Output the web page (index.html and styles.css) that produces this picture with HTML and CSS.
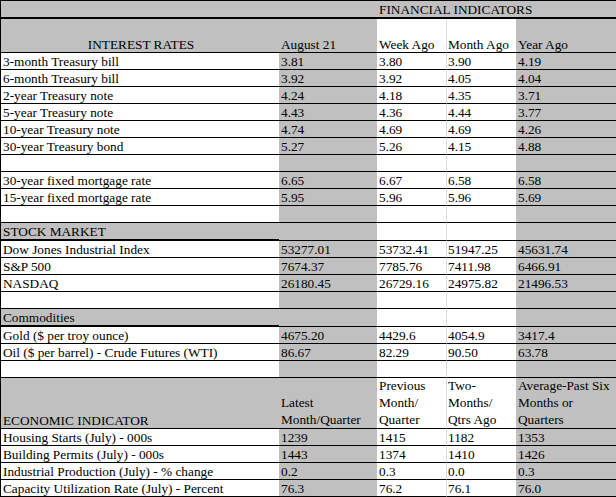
FILE: index.html
```html
<!DOCTYPE html>
<html>
<head>
<meta charset="utf-8">
<title>Financial Indicators</title>
<link rel="stylesheet" href="styles.css">
</head>
<body>
<div class="sheet">
  <div class="row top">
    <div class="c c1"></div><div class="c c2"></div><div class="c span3">FINANCIAL INDICATORS</div>
  </div>
  <div class="row head">
    <div class="c c1 center">INTEREST RATES</div><div class="c c2">August 21</div><div class="c c3">Week Ago</div><div class="c c4">Month Ago</div><div class="c c5">Year Ago</div>
  </div>
  <div class="row"><div class="c c1">3-month Treasury bill</div><div class="c c2">3.81</div><div class="c c3">3.80</div><div class="c c4">3.90</div><div class="c c5">4.19</div></div>
  <div class="row"><div class="c c1">6-month Treasury bill</div><div class="c c2">3.92</div><div class="c c3">3.92</div><div class="c c4">4.05</div><div class="c c5">4.04</div></div>
  <div class="row"><div class="c c1">2-year Treasury note</div><div class="c c2">4.24</div><div class="c c3">4.18</div><div class="c c4">4.35</div><div class="c c5">3.71</div></div>
  <div class="row"><div class="c c1">5-year Treasury note</div><div class="c c2">4.43</div><div class="c c3">4.36</div><div class="c c4">4.44</div><div class="c c5">3.77</div></div>
  <div class="row"><div class="c c1">10-year Treasury note</div><div class="c c2">4.74</div><div class="c c3">4.69</div><div class="c c4">4.69</div><div class="c c5">4.26</div></div>
  <div class="row"><div class="c c1">30-year Treasury bond</div><div class="c c2">5.27</div><div class="c c3">5.26</div><div class="c c4">4.15</div><div class="c c5">4.88</div></div>
  <div class="row"><div class="c c1"></div><div class="c c2"></div><div class="c c3"></div><div class="c c4"></div><div class="c c5"></div></div>
  <div class="row"><div class="c c1">30-year fixed mortgage rate</div><div class="c c2">6.65</div><div class="c c3">6.67</div><div class="c c4">6.58</div><div class="c c5">6.58</div></div>
  <div class="row"><div class="c c1">15-year fixed mortgage rate</div><div class="c c2">5.95</div><div class="c c3">5.96</div><div class="c c4">5.96</div><div class="c c5">5.69</div></div>
  <div class="row"><div class="c c1"></div><div class="c c2"></div><div class="c c3"></div><div class="c c4"></div><div class="c c5"></div></div>
  <div class="row sec"><div class="c c1">STOCK MARKET</div><div class="c c2"></div><div class="c c3"></div><div class="c c4"></div><div class="c c5"></div></div>
  <div class="row"><div class="c c1">Dow Jones Industrial Index</div><div class="c c2">53277.01</div><div class="c c3">53732.41</div><div class="c c4">51947.25</div><div class="c c5">45631.74</div></div>
  <div class="row"><div class="c c1">S&amp;P 500</div><div class="c c2">7674.37</div><div class="c c3">7785.76</div><div class="c c4">7411.98</div><div class="c c5">6466.91</div></div>
  <div class="row"><div class="c c1">NASDAQ</div><div class="c c2">26180.45</div><div class="c c3">26729.16</div><div class="c c4">24975.82</div><div class="c c5">21496.53</div></div>
  <div class="row"><div class="c c1"></div><div class="c c2"></div><div class="c c3"></div><div class="c c4"></div><div class="c c5"></div></div>
  <div class="row sec"><div class="c c1">Commodities</div><div class="c c2"></div><div class="c c3"></div><div class="c c4"></div><div class="c c5"></div></div>
  <div class="row"><div class="c c1">Gold ($ per troy ounce)</div><div class="c c2">4675.20</div><div class="c c3">4429.6</div><div class="c c4">4054.9</div><div class="c c5">3417.4</div></div>
  <div class="row"><div class="c c1">Oil ($ per barrel) - Crude Futures (WTI)</div><div class="c c2">86.67</div><div class="c c3">82.29</div><div class="c c4">90.50</div><div class="c c5">63.78</div></div>
  <div class="row"><div class="c c1"></div><div class="c c2"></div><div class="c c3"></div><div class="c c4"></div><div class="c c5"></div></div>
  <div class="row ehead">
    <div class="c c1 gray">ECONOMIC INDICATOR</div>
    <div class="c c2 multi">Latest<br>Month/Quarter</div>
    <div class="c c3 multi">Previous<br>Month/<br>Quarter</div>
    <div class="c c4 multi">Two-<br>Months/<br>Qtrs Ago</div>
    <div class="c c5 multi">Average-Past Six<br>Months or<br>Quarters</div>
  </div>
  <div class="row"><div class="c c1">Housing Starts (July) - 000s</div><div class="c c2">1239</div><div class="c c3">1415</div><div class="c c4">1182</div><div class="c c5">1353</div></div>
  <div class="row"><div class="c c1">Building Permits (July) - 000s</div><div class="c c2">1443</div><div class="c c3">1374</div><div class="c c4">1410</div><div class="c c5">1426</div></div>
  <div class="row"><div class="c c1">Industrial Production (July) - % change</div><div class="c c2">0.2</div><div class="c c3">0.3</div><div class="c c4">0.0</div><div class="c c5">0.3</div></div>
  <div class="row"><div class="c c1">Capacity Utilization Rate (July) - Percent</div><div class="c c2">76.3</div><div class="c c3">76.2</div><div class="c c4">76.1</div><div class="c c5">76.0</div></div>
</div>
</body>
</html>
```

FILE: styles.css
```css
* { box-sizing: border-box; }
html, body { margin: 0; padding: 0; background: #fff; }
body {
  font-family: "Liberation Serif", "Times New Roman", serif;
  font-size: 13.3px;
  color: #000;
}
.sheet {
  width: 616px;
  display: flex;
  flex-direction: column;
}
.row {
  display: grid;
  grid-template-columns: 279px 98px 70px 69px 100px;
}
.c {
  height: 17px;
  border-bottom: 1px solid #000;
  padding-left: 2px;
  line-height: 15px;
  display: flex;
  align-items: flex-end;
  white-space: nowrap;
  overflow: visible;
}
.c1 { background: #fff; border-left: 1px solid #000; }
.c2 { background: #c0c0c0; }
.c3 { background: #fff; border-right: 1px solid #dadada; }
.c4 { background: #fff; padding-left: 1px; }
.c5 { background: #c0c0c0; }

.top .c {
  height: 19px;
  background: #c0c0c0;
  border-top: 1px solid #000;
  border-bottom: 2px solid #000;
}
.top .span3 { grid-column: span 3; }

.head .c { height: 34px; }
.head .c1 { background: #c0c0c0; }
.center { justify-content: center; }

.sec .c { height: 18px; }
.sec .c1 { background: #c0c0c0; border-bottom: 2px solid #000; }

.ehead .c { height: 51px; }
.ehead .gray { background: #c0c0c0; }
.multi {
  flex-direction: column;
  justify-content: flex-end;
  align-items: flex-start;
  line-height: 17px;
}
```
